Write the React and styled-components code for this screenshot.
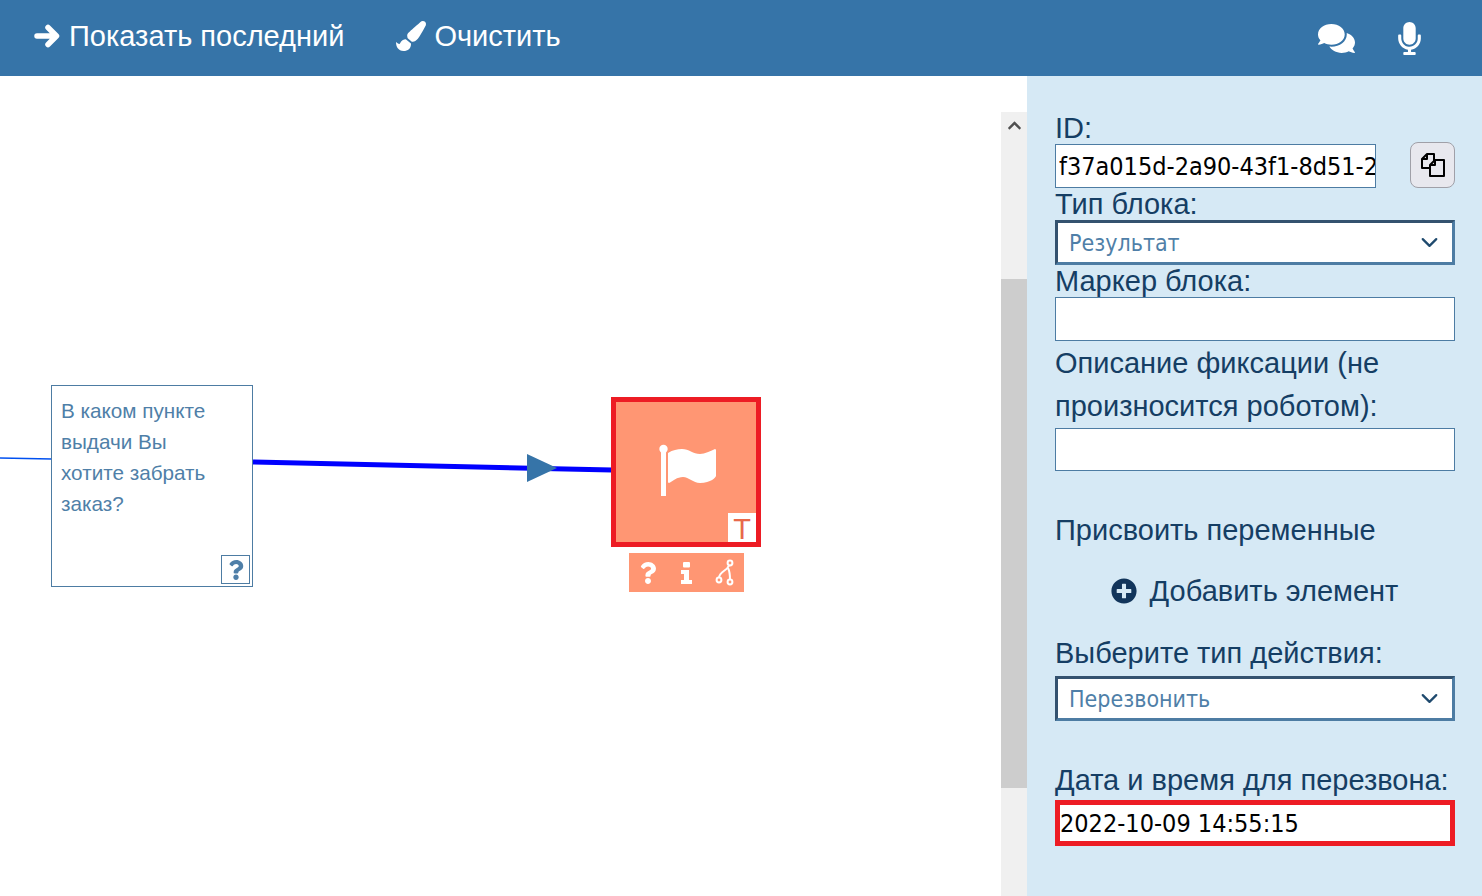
import React from 'react'
import styled, { createGlobalStyle } from 'styled-components'
import {
  FaPaintBrush,
  FaComments,
  FaMicrophone,
  FaPlusCircle,
  FaQuestion,
  FaChevronUp,
} from 'react-icons/fa'
import { FiChevronDown } from 'react-icons/fi'

const GlobalStyle = createGlobalStyle`
html, body {
  margin: 0;
  padding: 0;
  height: 100%;
  overflow: hidden;
  background: #fff;
  font-family: "Liberation Sans", Arial, sans-serif;
}
* { box-sizing: border-box; }
`

const Page = styled.div`
width: 1482px;
height: 896px;
display: flex;
flex-direction: column;
overflow: hidden;
`

const Header = styled.header`
height: 76px;
flex-shrink: 0;
background: #3674a8;
color: #fff;
display: flex;
align-items: center;
padding: 0 56px 0 34px;
`

const HeaderButton = styled.div`
display: flex;
align-items: center;
gap: ${p => p.$gap || 9}px;
font-size: 29px;
line-height: 32px;
padding-bottom: 4px;
margin-right: ${p => p.$right || 0}px;
svg { flex-shrink: 0; }
`

const HeaderRight = styled.div`
margin-left: auto;
display: flex;
align-items: center;
gap: 38px;
`

const Main = styled.div`
flex: 1;
display: flex;
min-height: 0;
`

const Canvas = styled.div`
position: relative;
flex: 1;
background: #fff;
overflow: hidden;
`

const Wires = styled.svg`
position: absolute;
left: 0;
top: 0;
`

const QuestionNode = styled.div`
position: absolute;
left: 51px;
top: 309px;
width: 202px;
height: 202px;
border: 1px solid #4d7ca3;
background: #fff;
padding: 9px 9px;
color: #4f7fa8;
font-size: 20.7px;
line-height: 31px;
`

const HelpBadge = styled.div`
position: absolute;
right: 2px;
bottom: 2px;
width: 29px;
height: 29px;
border: 1px solid #4d7ca3;
display: flex;
align-items: center;
justify-content: center;
color: #4f7fa8;
`

const ResultNode = styled.div`
position: absolute;
left: 611px;
top: 321px;
width: 150px;
height: 150px;
border: 5px solid #ed1c24;
background: #ff9673;
display: flex;
align-items: center;
justify-content: center;
svg.flag { margin: 0 0 2px 6px; }
`

const TypeBadge = styled.div`
position: absolute;
right: 0;
bottom: 0;
width: 28px;
height: 29px;
background: #fff;
color: #e8694a;
font-size: 29px;
line-height: 32px;
text-align: center;
`

const NodeTools = styled.div`
position: absolute;
left: 629px;
top: 477px;
width: 115px;
height: 39px;
background: #ff9673;
color: #fff;
display: flex;
align-items: center;
padding-left: 2px;
`

const ToolSlot = styled.div`
width: ${p => p.$width}px;
display: flex;
justify-content: center;
`

const ScrollTrack = styled.div`
width: 26px;
margin-top: 36px;
background: #f0f0f0;
flex-shrink: 0;
display: flex;
flex-direction: column;
align-items: center;
color: #505050;
`

const ScrollArrow = styled.div`
height: 167px;
padding-top: 6px;
`

const ScrollThumb = styled.div`
width: 100%;
height: 509px;
background: #cdcdcd;
`

const Sidebar = styled.aside`
width: 455px;
flex-shrink: 0;
background: #d6e9f5;
padding: 36px 27px 0 28px;
color: #153e64;
`

const Label = styled.div`
font-size: 29px;
line-height: ${p => p.$lineHeight || 32}px;
white-space: ${p => (p.$wrap ? 'normal' : 'nowrap')};
margin-top: ${p => p.$top || 0}px;
margin-bottom: ${p => p.$bottom || 0}px;
`

const InputRow = styled.div`
height: 44px;
display: flex;
align-items: flex-end;
justify-content: space-between;
`

const TextInput = styled.input`
display: block;
width: ${p => p.$width || '100%'};
height: ${p => p.$height || 44}px;
border: ${p => (p.$error ? '5px solid #ed1c24' : '1px solid #4d7ca3')};
padding: 0 0 0 ${p => (p.$error ? 0 : 3)}px;
margin: 0;
border-radius: 0;
outline: none;
background: #fff;
color: #000;
font-family: "DejaVu Sans Condensed", "DejaVu Sans", sans-serif;
font-stretch: condensed;
font-size: 25px;
`

const CopyButton = styled.button`
width: 45px;
height: 46px;
padding: 0;
background: #e8e8ee;
border: 1px solid #a0a0a8;
border-radius: 8px;
display: flex;
align-items: center;
justify-content: center;
`

const Dropdown = styled.div`
height: 45px;
background: #fff;
border: 3px solid #4d7ca3;
border-top-color: #34526f;
border-left-color: #34526f;
display: flex;
align-items: center;
justify-content: space-between;
padding: 0 9px 0 11px;
color: #4f7fa8;
font-family: "DejaVu Sans Condensed", "DejaVu Sans", sans-serif;
font-stretch: condensed;
font-size: 23px;
svg { color: #1f4a6e; }
`

const AddRow = styled.div`
display: flex;
align-items: center;
justify-content: center;
gap: 13px;
font-size: 29px;
line-height: 40px;
margin: 25px 0 26px;
padding-right: 1px;
svg { color: #12355b; }
`

const ArrowIcon = () => (
  <svg width="26" height="24" viewBox="0 0 26 24" fill="none" stroke="#fff" strokeWidth="5.5" strokeLinecap="round" strokeLinejoin="round">
    <path d="M3 12H22M14 3.5L22.5 12L14 20.5" />
  </svg>
)

const FlagIcon = () => (
  <svg className="flag" width="60" height="54" viewBox="0 0 60 54" fill="#fff">
    <circle cx="4.5" cy="5" r="4.2" />
    <rect x="2" y="6" width="5" height="46" />
    <path d="M9 9C14 6 18 5 23 5C30 5 34 10 41 10C46 10 51 7 56 5C57 5 57 6 57 7V32C57 33 52 39 41 39C34 39 30 33 24 33C18 33 14 37 10 39C9 39 9 38 9 37Z" />
  </svg>
)

const InfoIcon = () => (
  <svg width="11" height="22" viewBox="0 0 11 22" fill="#fff">
    <rect x="2" y="0" width="7" height="5.5" rx="1" />
    <path d="M0 8H8V18H11V22H0V18H3V12H0Z" />
  </svg>
)

const BranchIcon = () => (
  <svg width="20" height="28" viewBox="0 0 20 28" fill="none" stroke="#fff" strokeWidth="2">
    <circle cx="15" cy="4" r="2.4" />
    <circle cx="15" cy="23" r="2.4" />
    <circle cx="4" cy="21" r="2.4" />
    <path d="M14 6.5C12 12 5 12 4 18.5" />
    <path d="M13 9C15 13 15 16 15 20.5" />
  </svg>
)

const CopyIcon = () => (
  <svg width="26" height="26" viewBox="0 0 26 26" fill="#e8e8ee" stroke="#000" strokeWidth="2" strokeLinejoin="round">
    <path d="M2 16V7L7 2H14V16Z" />
    <path d="M2 7H7V2" fill="none" />
    <path d="M10 24V13L15 8H24V24Z" />
    <path d="M10 13H15V8" fill="none" />
  </svg>
)

const App = () => {
  return (
    <Page>
      <GlobalStyle />
      <Header>
        <HeaderButton $right={52}>
          <ArrowIcon />
          Показать последний
        </HeaderButton>
        <HeaderButton $gap={8}>
          <FaPaintBrush size={30} />
          Очистить
        </HeaderButton>
        <HeaderRight>
          <FaComments size={37} />
          <FaMicrophone size={33} />
        </HeaderRight>
      </Header>
      <Main>
        <Canvas>
          <Wires width="1001" height="820">
            <line x1="0" y1="382" x2="52" y2="383" stroke="#0050f0" strokeWidth="1.5" />
            <line x1="253" y1="386" x2="612" y2="394" stroke="#0000ff" strokeWidth="5" />
            <polygon points="527,378 557,392 527,406" fill="#3674a8" />
          </Wires>
          <QuestionNode>
            В каком пункте
            <br />
            выдачи Вы
            <br />
            хотите забрать
            <br />
            заказ?
            <HelpBadge>
              <FaQuestion size={20} />
            </HelpBadge>
          </QuestionNode>
          <ResultNode>
            <FlagIcon />
            <TypeBadge>T</TypeBadge>
          </ResultNode>
          <NodeTools>
            <ToolSlot $width={33}>
              <FaQuestion size={22} />
            </ToolSlot>
            <ToolSlot $width={45}>
              <InfoIcon />
            </ToolSlot>
            <ToolSlot $width={31}>
              <BranchIcon />
            </ToolSlot>
          </NodeTools>
        </Canvas>
        <ScrollTrack>
          <ScrollArrow>
            <FaChevronUp size={15} />
          </ScrollArrow>
          <ScrollThumb />
        </ScrollTrack>
        <Sidebar>
          <Label>ID:</Label>
          <InputRow>
            <TextInput $width="321px" readOnly value="f37a015d-2a90-43f1-8d51-2c7b14e6a0d3" />
            <CopyButton>
              <CopyIcon />
            </CopyButton>
          </InputRow>
          <Label>Тип блока:</Label>
          <Dropdown>
            Результат
            <FiChevronDown size={27} />
          </Dropdown>
          <Label>Маркер блока:</Label>
          <TextInput readOnly value="" />
          <Label $wrap $lineHeight={43} $top={1}>
            Описание фиксации (не произносится роботом):
          </Label>
          <TextInput $height={43} readOnly value="" />
          <Label $top={43} $bottom={1}>Присвоить переменные</Label>
          <AddRow>
            <FaPlusCircle size={26} />
            Добавить элемент
          </AddRow>
          <Label $bottom={7}>Выберите тип действия:</Label>
          <Dropdown>
            Перезвонить
            <FiChevronDown size={27} />
          </Dropdown>
          <Label $top={43} $bottom={4}>
            Дата и время для перезвона:
          </Label>
          <TextInput $error $height={46} readOnly value="2022-10-09 14:55:15" />
        </Sidebar>
      </Main>
    </Page>
  )
}

export default App
